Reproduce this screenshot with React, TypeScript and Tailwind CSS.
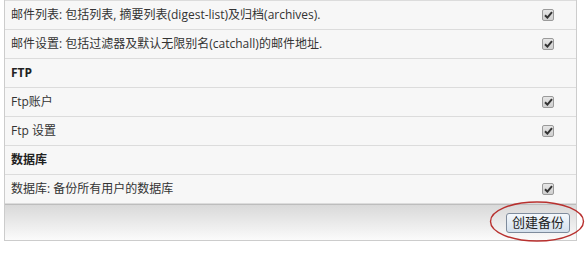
import React from "react";

type Row =
  | { kind: "item"; label: string }
  | { kind: "section"; label: string };

const rows: Row[] = [
  { kind: "item", label: "邮件列表: 包括列表, 摘要列表(digest-list)及归档(archives)." },
  { kind: "item", label: "邮件设置: 包括过滤器及默认无限别名(catchall)的邮件地址." },
  { kind: "section", label: "FTP" },
  { kind: "item", label: "Ftp账户" },
  { kind: "item", label: "Ftp 设置" },
  { kind: "section", label: "数据库" },
  { kind: "item", label: "数据库: 备份所有用户的数据库" },
];

const CheckBox = () => (
  <span className="flex h-[12px] w-[12px] items-center justify-center rounded-[2px] border border-[#9a9a9a] bg-gradient-to-b from-[#e6e6e6] to-[#cfcfcf]">
    <svg width="9" height="8" viewBox="0 0 9 8">
      <path d="M1 4.2 L3.4 6.6 L8 1.2" fill="none" stroke="#333" strokeWidth="2" />
    </svg>
  </span>
);

export default function App() {
  return (
    <div
      className="relative h-[256px] w-[587px] bg-white text-[12px] text-[#333]"
      style={{ fontFamily: '"Open Sans", "Noto Sans CJK SC", sans-serif' }}
    >
      <div className="ml-[4px] w-[573px] border-x border-b border-[#cccccc]">
        {/* rows */}
        <div className="border-t border-[#dcdcdc] bg-[#f7f7f7]">
          {rows.map((row, i) => (
            <div
              key={i}
              className="flex h-[29px] items-center justify-between border-b border-[#dcdcdc] pl-[6px] pr-[22px]"
            >
              {row.kind === "section" ? (
                <span className="font-bold text-[#222]">{row.label}</span>
              ) : (
                <>
                  <span>{row.label}</span>
                  <CheckBox />
                </>
              )}
            </div>
          ))}
        </div>

        {/* footer with button */}
        <div className="relative flex h-[36px] items-center justify-end border-t border-[#bdbdbd] bg-gradient-to-b from-[#d9d9d9] to-[#fbfbfb] pr-[6px]">
          <button className="h-[20px] w-[64px] rounded-[3px] border border-[#7e8b9c] bg-gradient-to-b from-[#f4f8fc] to-[#d4e0ec] text-[13px] leading-none text-[#222]">
            创建备份
          </button>
          <svg
            className="pointer-events-none absolute left-[484px] top-[-4px]"
            width="96"
            height="42"
            viewBox="0 0 96 42"
          >
            <ellipse cx="48" cy="20.5" rx="46.5" ry="19.5" fill="none" stroke="#b8302e" strokeWidth="1.4" />
          </svg>
        </div>
      </div>
    </div>
  );
}
